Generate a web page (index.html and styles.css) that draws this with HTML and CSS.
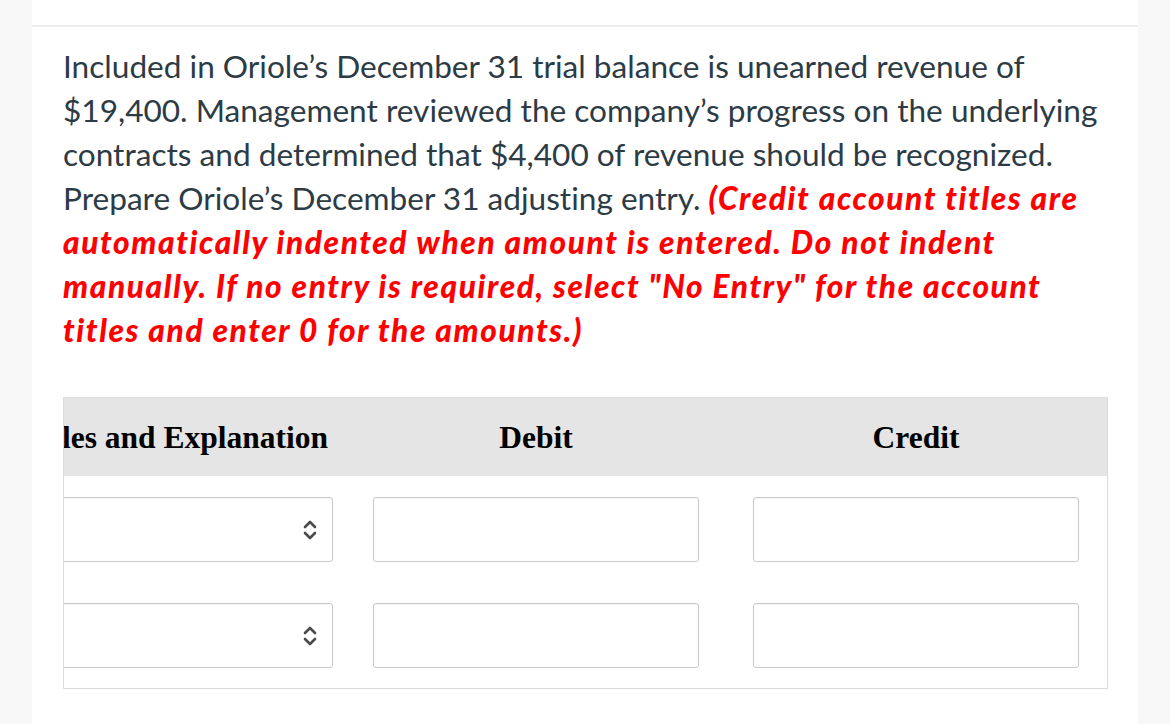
FILE: index.html
```html
<!DOCTYPE html>
<html lang="en">
<head>
<meta charset="utf-8">
<title>Adjusting entry</title>
<link rel="stylesheet" href="styles.css">
</head>
<body>
<div class="page">
  <div class="panel">
    <div class="topbar"></div>
    <div class="content">
      <p class="question">Included in Oriole’s December 31 trial balance is unearned revenue of $19,400. Management reviewed the company’s progress on the underlying contracts and determined that $4,400 of revenue should be recognized. Prepare Oriole’s December 31 adjusting entry. <strong class="note">(Credit account titles are automatically indented when amount is entered. Do not indent manually. If no entry is required, select "No Entry" for the account titles and enter 0 for the amounts.)</strong></p>

      <div class="viewport">
        <div class="journal">
          <div class="cell head col-acct"><span>Account Titles and Explanation</span></div>
          <div class="cell head col-amt"><span>Debit</span></div>
          <div class="cell head col-amt col-last"><span>Credit</span></div>

          <div class="cell row col-acct">
            <div class="select">
              <svg class="chev" width="14" height="22" viewBox="0 0 14 22"><path d="M2 8 L7 3 L12 8 M2 14 L7 19 L12 14" fill="none" stroke="#4a4a4a" stroke-width="2.6" stroke-linecap="round" stroke-linejoin="round"/></svg>
            </div>
          </div>
          <div class="cell row col-amt"><div class="input"></div></div>
          <div class="cell row col-amt col-last"><div class="input"></div></div>

          <div class="cell row col-acct">
            <div class="select">
              <svg class="chev" width="14" height="22" viewBox="0 0 14 22"><path d="M2 8 L7 3 L12 8 M2 14 L7 19 L12 14" fill="none" stroke="#4a4a4a" stroke-width="2.6" stroke-linecap="round" stroke-linejoin="round"/></svg>
            </div>
          </div>
          <div class="cell row col-amt"><div class="input"></div></div>
          <div class="cell row col-amt col-last"><div class="input"></div></div>
        </div>
      </div>
    </div>
  </div>
</div>
</body>
</html>
```
FILE: styles.css
```css
html, body {
  margin: 0;
  padding: 0;
  background: #f8f8f8;
}
.page {
  padding: 0 32px;
  height: 724px;
  overflow: hidden;
}
.panel {
  background: #ffffff;
  height: 724px;
}
.topbar {
  height: 25px;
  border-bottom: 2px solid #ececec;
}
.content {
  padding: 17px 26px 0 31px;
}
.question {
  margin: 0;
  font-family: Lato, "Open Sans", sans-serif;
  font-size: 31.6px;
  line-height: 44px;
  color: #2d3b45;
  font-variant-ligatures: no-common-ligatures;
}
.note {
  color: #ff0000;
  font-style: italic;
  font-weight: 900;
  letter-spacing: 1.6px;
}
.viewport {
  margin-top: 45px;
  width: 1043px;
  border: 1px solid #dcdcdc;
  overflow: hidden;
}
.journal {
  margin-left: -252px;
  display: grid;
  grid-template-columns: 541px 380px 374px;
}
.cell {
  padding-left: 20px;
}
.head {
  background: #e5e5e5;
  height: 78px;
  box-sizing: border-box;
  padding-top: 2px;
  display: flex;
  align-items: center;
  font-family: "Liberation Serif", "Times New Roman", serif;
  font-weight: 700;
  font-size: 31.5px;
  color: #000;
  white-space: nowrap;
}
.head.col-acct {
  justify-content: flex-end;
  padding-right: 25px;
}
.head.col-amt span {
  width: 326px;
  text-align: center;
}
.row {
  padding-top: 21px;
  padding-bottom: 20px;
}
.col-acct.row {
  padding-right: 20px;
}
.select, .input {
  height: 65px;
  box-sizing: border-box;
  border: 1px solid #c9c9c9;
  border-radius: 3px;
  background: #fff;
  box-shadow: inset 0 1px 1px rgba(0,0,0,0.05);
}
.select {
  width: 501px;
  display: flex;
  align-items: center;
  justify-content: flex-end;
  padding-right: 15px;
}
.input {
  width: 326px;
}
.chev {
  display: block;
}
```
